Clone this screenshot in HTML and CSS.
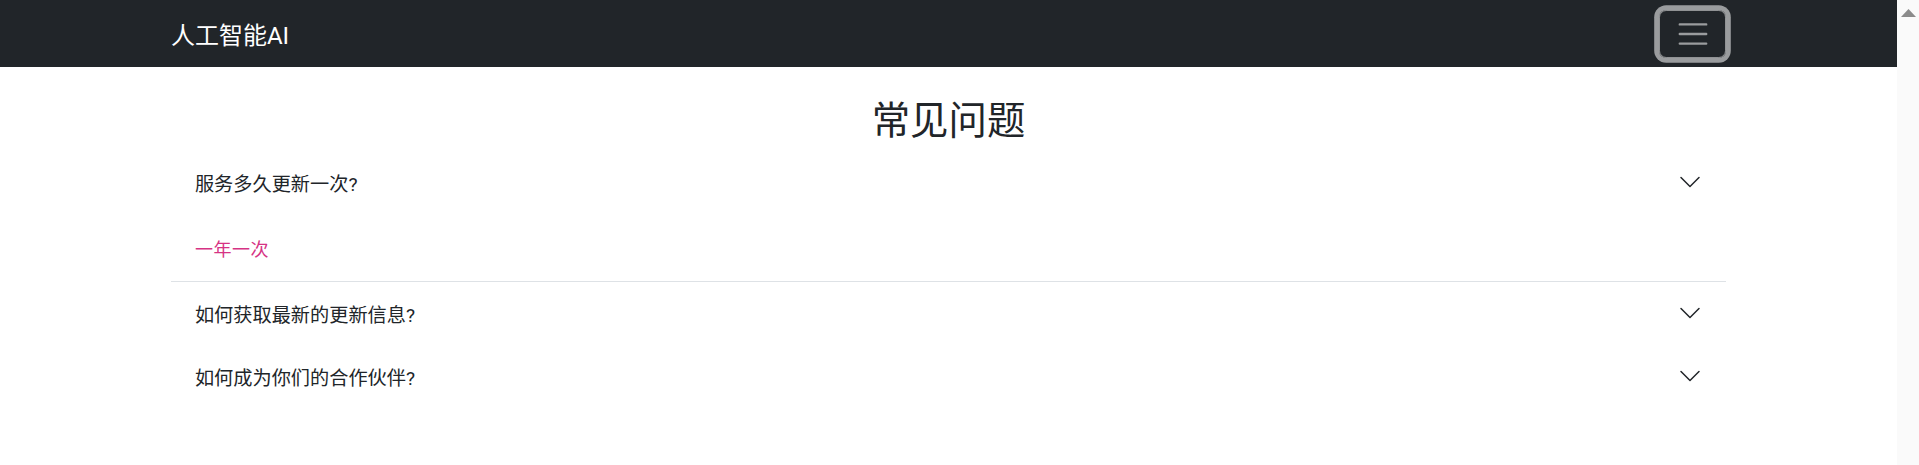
FILE: index.html
```html
<!DOCTYPE html>
<html lang="zh-CN">
<head>
  <meta charset="UTF-8" />
  <meta name="viewport" content="width=device-width, initial-scale=1.0" />
  <title>常见问题 - 人工智能AI</title>
  <link rel="stylesheet" href="styles.css">
</head>
<body>

  <div class="page">
    <nav class="navbar">
      <div class="container nav-inner">
        <a class="brand" href="#">人工智能AI</a>
        <button class="toggler" type="button" aria-label="菜单">
          <svg width="36" height="36" viewBox="0 0 30 30">
            <path d="M4 7h22M4 15h22M4 23h22" stroke="rgba(255,255,255,0.55)" stroke-width="2" stroke-linecap="round" fill="none"/>
          </svg>
        </button>
      </div>
    </nav>

    <main class="container faq">
      <h2>常见问题</h2>
      <div class="accordion">
        <div class="item open">
          <button class="acc-btn" type="button">
            <span>服务多久更新一次?</span>
            <svg class="chevron" width="24" height="24" viewBox="0 0 16 16"><path d="M1.646 4.646a.5.5 0 0 1 .708 0L8 10.293l5.646-5.647a.5.5 0 0 1 .708.708l-6 6a.5.5 0 0 1-.708 0l-6-6a.5.5 0 0 1 0-.708z" fill="#212529"/></svg>
          </button>
          <div class="acc-body"><code>一年一次</code></div>
        </div>
        <div class="item">
          <button class="acc-btn" type="button">
            <span>如何获取最新的更新信息?</span>
            <svg class="chevron" width="24" height="24" viewBox="0 0 16 16"><path d="M1.646 4.646a.5.5 0 0 1 .708 0L8 10.293l5.646-5.647a.5.5 0 0 1 .708.708l-6 6a.5.5 0 0 1-.708 0l-6-6a.5.5 0 0 1 0-.708z" fill="#212529"/></svg>
          </button>
        </div>
        <div class="item">
          <button class="acc-btn" type="button">
            <span>如何成为你们的合作伙伴?</span>
            <svg class="chevron" width="24" height="24" viewBox="0 0 16 16"><path d="M1.646 4.646a.5.5 0 0 1 .708 0L8 10.293l5.646-5.647a.5.5 0 0 1 .708.708l-6 6a.5.5 0 0 1-.708 0l-6-6a.5.5 0 0 1 0-.708z" fill="#212529"/></svg>
          </button>
        </div>
      </div>
    </main>
  </div>

  <div class="scrollbar">
    <svg width="15" height="8" viewBox="0 0 15 8"><polygon points="7.5,0 15,8 0,8" fill="#8b8b8b"/></svg>
  </div>

</body>
</html>
```

FILE: styles.css
```css
* {
  box-sizing: border-box;
}
body {
  margin: 0;
  height: 465px;
  overflow: hidden;
  display: flex;
  background: white;
  color: #212529;
  font-family: "Segoe UI", Roboto, "Noto Sans CJK SC", sans-serif;
  font-size: 19.2px;
}
.page {
  flex: 1;
  min-width: 0;
}
.container {
  max-width: 1584px;
  margin: 0 auto;
  padding: 0 14.4px;
}
.navbar {
  background-color: #212529;
  padding: 9.6px 0;
}
.nav-inner {
  display: flex;
  align-items: center;
  justify-content: space-between;
}
.brand {
  color: white;
  font-size: 24px;
  text-decoration: none;
}
.toggler {
  width: 67.2px;
  height: 48px;
  padding: 0;
  display: flex;
  align-items: center;
  justify-content: center;
  background: transparent;
  border: 1.2px solid rgba(255,255,255,0.5);
  border-radius: 7.2px;
  box-shadow: 0 0 0 4.8px rgba(255,255,255,0.55);
}
.toggler svg {
  display: block;
}
.faq {
  margin-top: 28.8px;
}
h2 {
  margin: 0 0 9.6px;
  padding-top: 4px;
  height: 46px;
  font-size: 38.4px;
  font-weight: 400;
  line-height: 42px;
  text-align: center;
}
.acc-btn {
  width: 100%;
  height: 63.5px;
  padding: 0 24px;
  display: flex;
  align-items: center;
  justify-content: space-between;
  border: none;
  background: white;
  color: #212529;
  font: inherit;
  text-align: left;
}
.chevron {
  flex-shrink: 0;
  margin-top: -2px;
}
.acc-body {
  height: 65.8px;
  padding: 0 24px;
  display: flex;
  align-items: center;
}
.item.open {
  border-bottom: 1px solid #dee2e6;
}
code {
  color: #d63384;
  font-family: "Liberation Mono", "Noto Sans CJK SC", monospace;
  font-size: 18px;
  letter-spacing: 0.5px;
}
.scrollbar {
  width: 22px;
  flex-shrink: 0;
  background: #fafafa;
  padding-top: 9px;
  display: flex;
  justify-content: center;
  align-items: flex-start;
}
.scrollbar svg {
  display: block;
}
```
